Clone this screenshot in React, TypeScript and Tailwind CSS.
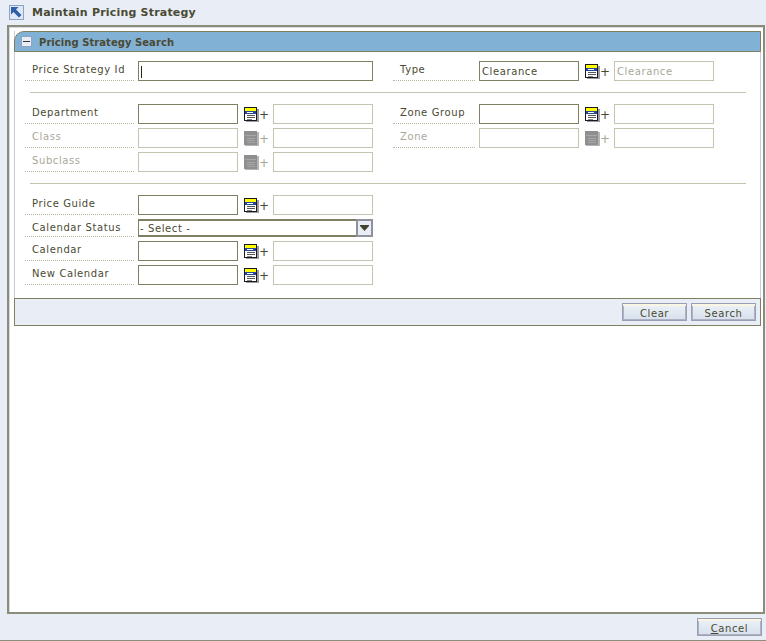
const labelFont = "font-['DejaVu_Sans',sans-serif] text-[10px] tracking-[0.6px]"

function LookupIcon({ disabled }: { disabled?: boolean }) {
  if (disabled) {
    return (
      <svg width="15" height="15" viewBox="0 0 15 15" className="shrink-0">
        <rect x="1" y="1" width="14" height="14" fill="#b5b5b5" />
        <rect x="0" y="0" width="13" height="14" fill="#8f8f8f" />
        <rect x="1" y="4" width="11" height="1" fill="#a8a8a8" />
        <rect x="3" y="7" width="8" height="1" fill="#a8a8a8" />
        <rect x="3" y="9" width="8" height="1" fill="#a8a8a8" />
        <rect x="3" y="11" width="8" height="1" fill="#a8a8a8" />
      </svg>
    )
  }
  return (
    <svg width="15" height="15" viewBox="0 0 15 15" className="shrink-0">
      <rect x="2" y="2" width="13" height="13" fill="#9a9aa8" />
      <rect x="0" y="0" width="13" height="14" fill="#1a1a1a" />
      <rect x="1" y="1" width="11" height="3" fill="#ffff00" />
      <rect x="1" y="4" width="11" height="3" fill="#24479c" />
      <rect x="3" y="5" width="6" height="1" fill="#ffffff" />
      <rect x="1" y="7" width="11" height="6" fill="#ffffff" />
      <rect x="3" y="8" width="8" height="1" fill="#555555" />
      <rect x="3" y="10" width="8" height="1" fill="#555555" />
      <rect x="3" y="12" width="5" height="1" fill="#888888" />
    </svg>
  )
}

function Field({ width, value, disabled, caret }: { width: string; value?: string; disabled?: boolean; caret?: boolean }) {
  return (
    <div className={`${width} h-5 bg-white border flex items-center px-[2px] pt-[1px] ${labelFont} ${disabled ? "border-[#c4c4b0] text-[#a8a89a]" : "border-[#7f7f62] text-[#4a4a33]"}`}>
      {caret && <span className="w-px h-3 bg-[#222]" />}
      {value}
    </div>
  )
}

function Label({ text, width, disabled, tall }: { text: string; width: string; disabled?: boolean; tall?: boolean }) {
  return (
    <div className={`${width} ${tall ? "h-[18px]" : "h-5"} border-b border-dotted border-[#b4b4a0] pl-[7px] pt-[1px] leading-[15px] ${labelFont} ${disabled ? "text-[#a8a89a]" : "text-[#4a4a33]"}`}>
      {text}
    </div>
  )
}

function Lookup({ disabled, value, width }: { disabled?: boolean; value?: string; width: string }) {
  return (
    <>
      <div className="ml-[2px] h-5 pt-[3px] flex items-start">
        <LookupIcon disabled={disabled} />
        <span className={`w-[10px] text-center font-['DejaVu_Sans',sans-serif] text-[12px] leading-[16px] ${disabled ? "text-[#a8a89a]" : "text-[#4a4a33]"}`}>+</span>
      </div>
      <Field width={width} value={value} disabled />
    </>
  )
}

function LeftRow({ label, disabled }: { label: string; disabled?: boolean }) {
  return (
    <div className="flex items-start gap-1">
      <Label text={label} width="w-[109px]" disabled={disabled} />
      <Field width="w-[100px]" disabled={disabled} />
      <Lookup disabled={disabled} width="w-[100px]" />
    </div>
  )
}

function RightRow({ label, disabled, value, desc }: { label: string; disabled?: boolean; value?: string; desc?: string }) {
  return (
    <div className="flex items-start gap-1">
      <Label text={label} width="w-[82px]" disabled={disabled} />
      <Field width="w-[100px]" disabled={disabled} value={value} />
      <Lookup disabled={disabled} value={desc} width="w-[100px]" />
    </div>
  )
}

function Btn({ children }: { children: React.ReactNode }) {
  return (
    <button className={`w-[65px] h-[18px] border border-[#9a9fb2] shadow-[inset_0_2px_0_#fbf5e3,inset_1px_0_0_#aeb3c4,inset_-1px_-1px_0_#aeb3c4] bg-gradient-to-b from-[#eef2f7] to-[#d6e0ec] text-[#4a4a33] leading-none pt-[3px] ${labelFont}`}>
      {children}
    </button>
  )
}

export default function App() {
  return (
    <div className="w-[766px] h-[641px] bg-[#e8edf6] flex flex-col overflow-hidden">
      <div className="h-[25px] flex items-center pl-[9px] shrink-0">
        <svg width="15" height="15" viewBox="0 0 15 15">
          <rect x="0.5" y="0.5" width="14" height="14" fill="#dfe8f5" stroke="#8da3c4" />
          <path d="M2 2 H9.5 L7 4.5 L12.5 10 L10 12.5 L4.5 7 L2 9.5 Z" fill="#2f5fa8" />
        </svg>
        <span className="ml-2 pt-[2px] font-['DejaVu_Sans',sans-serif] font-bold text-[11px] tracking-[0.2px] text-[#4a4a33]">Maintain Pricing Strategy</span>
      </div>

      <div className="ml-[7px] w-[758px] h-[589px] shrink-0 border-2 border-[#8c8c7a] bg-white shadow-[inset_1px_1px_0_#d5d9e2] pl-[5px] pt-1 pr-[2px]">
        <div className="border-x border-[#c8ccd6]">
          <div className="h-[21px] -mx-px bg-[#82b1d6] border border-[#7f7f62] rounded-tl-[10px] flex items-center pl-[6px]">
            <span className="w-[11px] h-[11px] bg-[#e8edf6] border border-[#8da3c4] flex items-center justify-center">
              <span className="w-[7px] h-px bg-[#333]" />
            </span>
            <span className="ml-[7px] pt-[1px] font-['DejaVu_Sans',sans-serif] font-bold text-[10px] tracking-[0.05px] text-[#4a4a33]">Pricing Strategy Search</span>
          </div>

          <div className="pl-[10px] pt-[9px]">
            <div className="flex items-start">
              <div className="flex items-start gap-1">
                <Label text="Price Strategy Id" width="w-[109px]" />
                <Field width="w-[235px]" caret />
              </div>
              <div className="ml-[20px]">
                <RightRow label="Type" value="Clearance" desc="Clearance" />
              </div>
            </div>

            <div className="mt-[11px] ml-[5px] mr-[14px] h-px bg-[#c4c4b0]" />

            <div className="mt-[11px] flex items-start">
              <div className="flex flex-col gap-1">
                <LeftRow label="Department" />
                <LeftRow label="Class" disabled />
                <LeftRow label="Subclass" disabled />
              </div>
              <div className="ml-[20px] flex flex-col gap-1">
                <RightRow label="Zone Group" />
                <RightRow label="Zone" disabled />
              </div>
            </div>

            <div className="mt-[11px] ml-[5px] mr-[14px] h-px bg-[#c4c4b0]" />

            <div className="mt-[11px] flex flex-col gap-1">
              <LeftRow label="Price Guide" />
              <div className="flex items-start gap-1">
                <Label text="Calendar Status" width="w-[109px]" tall />
                <div className={`w-[235px] h-[18px] border border-[#7f7f62] border-t-2 border-b-2 flex items-center justify-between pl-[1px] ${labelFont} text-[#4a4a33]`}>
                  <span>- Select -</span>
                  <span className="w-[17px] h-[18px] -my-[2px] -mr-px shrink-0 bg-[#e8edf6] border-2 border-[#8f929c] flex items-center justify-center">
                    <svg width="9" height="6" viewBox="0 0 9 6"><path d="M0 0 H9 V1 L4.5 6 L0 1 Z" fill="#44442e" /></svg>
                  </span>
                </div>
              </div>
              <LeftRow label="Calendar" />
              <LeftRow label="New Calendar" />
            </div>
          </div>

          <div className="mt-[13px] -mx-px h-[28px] bg-[#e8edf6] border border-[#7f7f62] flex items-center justify-end gap-1 pr-[4px]">
            <Btn>Clear</Btn>
            <Btn>Search</Btn>
          </div>
        </div>
      </div>

      <div className="flex-1 flex items-center justify-end pr-1 border-b border-[#8c8c7a]">
        <Btn><span className="underline">C</span>ancel</Btn>
      </div>
    </div>
  )
}
